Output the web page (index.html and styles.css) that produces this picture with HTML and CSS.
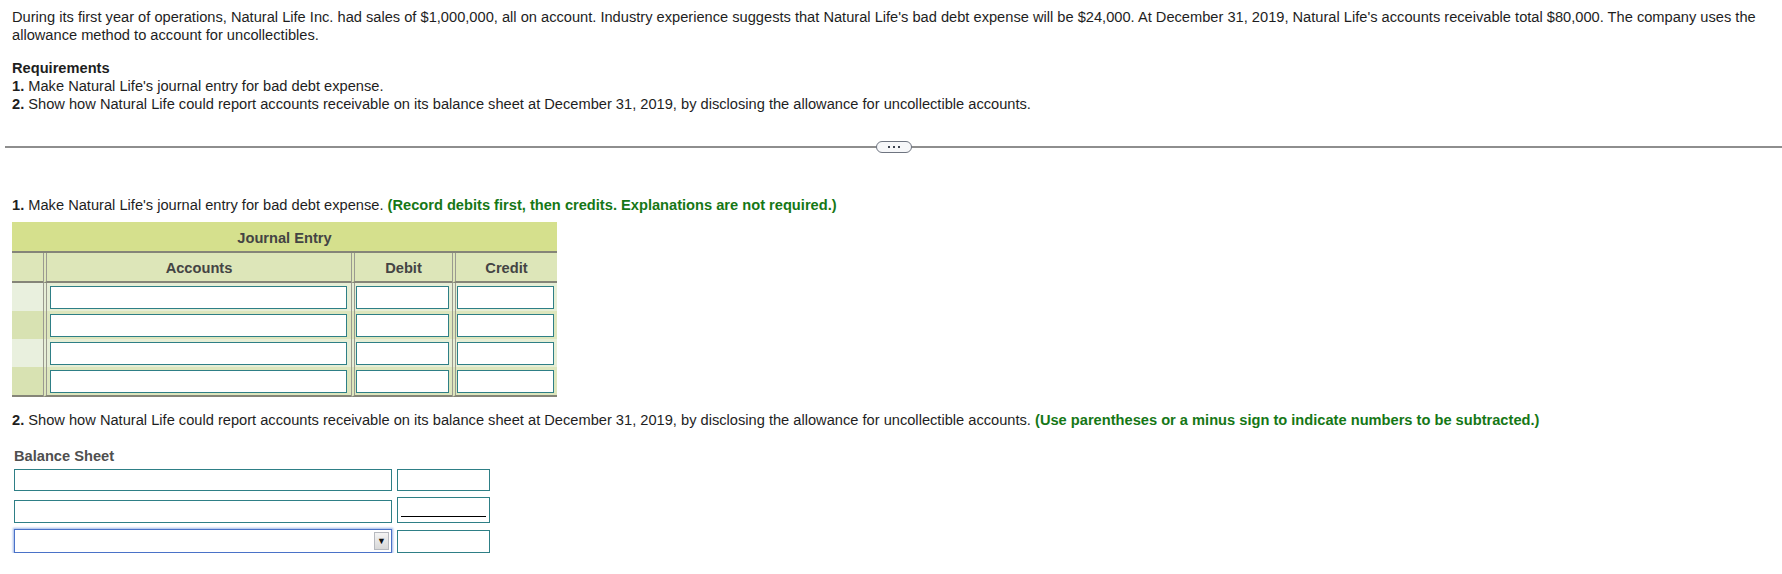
FILE: index.html
```html
<!DOCTYPE html>
<html lang="en">
<head>
<meta charset="utf-8">
<title>Natural Life Inc. - Bad Debt Expense</title>
<link rel="stylesheet" href="styles.css">
</head>
<body>
<div class="problem">
  <p class="intro">During its first year of operations, Natural Life Inc. had sales of $1,000,000, all on account. Industry experience suggests that Natural Life's bad debt expense will be $24,000. At December 31, 2019, Natural Life's accounts receivable total $80,000. The company uses the allowance method to account for uncollectibles.</p>
  <div class="reqs">
    <div class="req-title">Requirements</div>
    <div><b>1.</b> Make Natural Life's journal entry for bad debt expense.</div>
    <div><b>2.</b> Show how Natural Life could report accounts receivable on its balance sheet at December 31, 2019, by disclosing the allowance for uncollectible accounts.</div>
  </div>
</div>

<div class="divider"><span class="more"><i></i><i></i><i></i></span></div>

<div class="answer">
  <p class="q q1"><b>1.</b> Make Natural Life's journal entry for bad debt expense. <span class="hint">(Record debits first, then credits. Explanations are not required.)</span></p>

  <table class="je">
    <colgroup>
      <col class="w0">
      <col class="w1">
      <col class="w2">
      <col class="w3">
    </colgroup>
    <thead>
      <tr><th class="title" colspan="4">Journal Entry</th></tr>
      <tr class="head">
        <th class="c0"></th>
        <th class="c1">Accounts</th>
        <th class="c2">Debit</th>
        <th class="c3">Credit</th>
      </tr>
    </thead>
    <tbody>
      <tr class="odd">
        <td class="c0"></td>
        <td class="c1"><input type="text" class="field"></td>
        <td class="c2"><input type="text" class="field"></td>
        <td class="c3"><input type="text" class="field"></td>
      </tr>
      <tr class="even">
        <td class="c0"></td>
        <td class="c1"><input type="text" class="field"></td>
        <td class="c2"><input type="text" class="field"></td>
        <td class="c3"><input type="text" class="field"></td>
      </tr>
      <tr class="odd">
        <td class="c0"></td>
        <td class="c1"><input type="text" class="field"></td>
        <td class="c2"><input type="text" class="field"></td>
        <td class="c3"><input type="text" class="field"></td>
      </tr>
      <tr class="even last">
        <td class="c0"></td>
        <td class="c1"><input type="text" class="field"></td>
        <td class="c2"><input type="text" class="field"></td>
        <td class="c3"><input type="text" class="field"></td>
      </tr>
    </tbody>
  </table>

  <p class="q q2"><b>2.</b> Show how Natural Life could report accounts receivable on its balance sheet at December 31, 2019, by disclosing the allowance for uncollectible accounts. <span class="hint">(Use parentheses or a minus sign to indicate numbers to be subtracted.)</span></p>

  <div class="bs">
    <div class="bs-title">Balance Sheet</div>
    <div class="bs-grid">
      <input type="text" class="field bs-wide r1">
      <input type="text" class="field bs-num r1">
      <input type="text" class="field bs-wide r2">
      <div class="bs-sub"><div class="bs-sub-line"></div></div>
      <div class="select"><span class="arrow">&#9660;</span></div>
      <input type="text" class="field bs-num r3">
    </div>
  </div>
</div>
</body>
</html>
```

FILE: styles.css
```css
* {
  box-sizing: border-box;
}

body {
  margin: 8px 0 0 5px;
  font-family: "Liberation Sans", Arial, sans-serif;
  font-size: 14.65px;
  line-height: 18px;
  color: #1e1e1e;
  background: #ffffff;
}

.problem {
  padding: 0 8px 0 7px;
}

.intro {
  margin: 0;
}

.reqs {
  margin-top: 14.6px;
}

.req-title {
  font-weight: bold;
}

/* divider with ellipsis toggle */
.divider {
  position: relative;
  height: 2px;
  margin-top: 33px;
  background: #8e8e8e;
}

.more {
  position: absolute;
  left: 871px;
  top: -5px;
  width: 36px;
  height: 12px;
  border: 1px solid #6e7480;
  border-radius: 7px;
  background: #f6f7f9;
  display: flex;
  align-items: center;
  justify-content: center;
  gap: 3px;
}

.more i {
  display: block;
  width: 2px;
  height: 2px;
  background: #3d4350;
}

.answer {
  padding-left: 7px;
}

.q {
  margin: 0;
}

.q1 {
  margin-top: 48px;
}

.hint {
  color: #167716;
  font-weight: bold;
}

/* journal entry table */
.je {
  margin-top: 8px;
  border-collapse: separate;
  border-spacing: 0;
  width: 545px;
  table-layout: fixed;
}

.je .w0 {
  width: 31px;
}

.je .w1 {
  width: 308px;
}

.je .w2 {
  width: 101px;
}

.je .w3 {
  width: 105px;
}

.je th,
.je td {
  padding: 0;
}

.je th {
  font-weight: bold;
  color: #444444;
  text-align: center;
}

.je .title {
  height: 31px;
  padding-top: 3px;
  background: #d5e08d;
  border-bottom: 2px solid #858578;
}

.je .head th {
  height: 30px;
  padding-top: 3px;
  background: #dde6b9;
  border-bottom: 2px solid #858578;
}

.je .c1,
.je .c2,
.je .c3 {
  border-left: 4px double #9a9a90;
}

.je td.c1 {
  padding: 3px 4px 2px 3px;
}

.je td.c2,
.je td.c3 {
  padding: 3px 3px 2px 1px;
}

.je .odd td {
  background: #e6eed6;
}

.je .odd td.c0 {
  background: #e9f0de;
}

.je .even td {
  background: #dde6bd;
}

.je .even td.c0 {
  background: #d8e2b2;
}

.je .last td {
  border-bottom: 2px solid #858578;
}

.field {
  display: block;
  width: 100%;
  height: 23px;
  margin: 0;
  padding: 0 3px;
  border: 1px solid #2e7f86;
  background: #ffffff;
  font: inherit;
  outline: none;
}

.q2 {
  margin-top: 14px;
}

/* balance sheet */
.bs {
  padding-left: 2px;
}

.bs-title {
  margin-top: 18px;
  font-weight: bold;
  color: #4f4f4f;
}

.bs-grid {
  margin-top: 4.5px;
  display: grid;
  grid-template-columns: 378px 93px;
  column-gap: 5px;
  align-items: end;
}

.bs-grid .r1 {
  height: 22px;
}

.bs-wide.r2 {
  height: 23px;
  margin-top: 9px;
}

.bs-sub {
  height: 26px;
  margin-top: 6px;
  padding: 3px 3px 5px 3px;
  border: 1px solid #2e7f86;
  background: #ffffff;
}

.bs-sub-line {
  height: 100%;
  border-bottom: 1px solid #000000;
}

.select {
  height: 24px;
  margin-top: 6px;
  border: 1px solid #4a72c8;
  box-shadow: 0 0 2px 1px #9db4e6;
  background: #ffffff;
  display: flex;
  justify-content: flex-end;
  padding: 2px;
}

.arrow {
  width: 15px;
  height: 18px;
  border: 1px solid #b6b9bf;
  background: linear-gradient(#f4f4f4, #d8d8d8);
  color: #111111;
  font-size: 9px;
  line-height: 16px;
  text-align: center;
}

.bs-num.r3 {
  height: 23px;
  margin-top: 7px;
}
```
